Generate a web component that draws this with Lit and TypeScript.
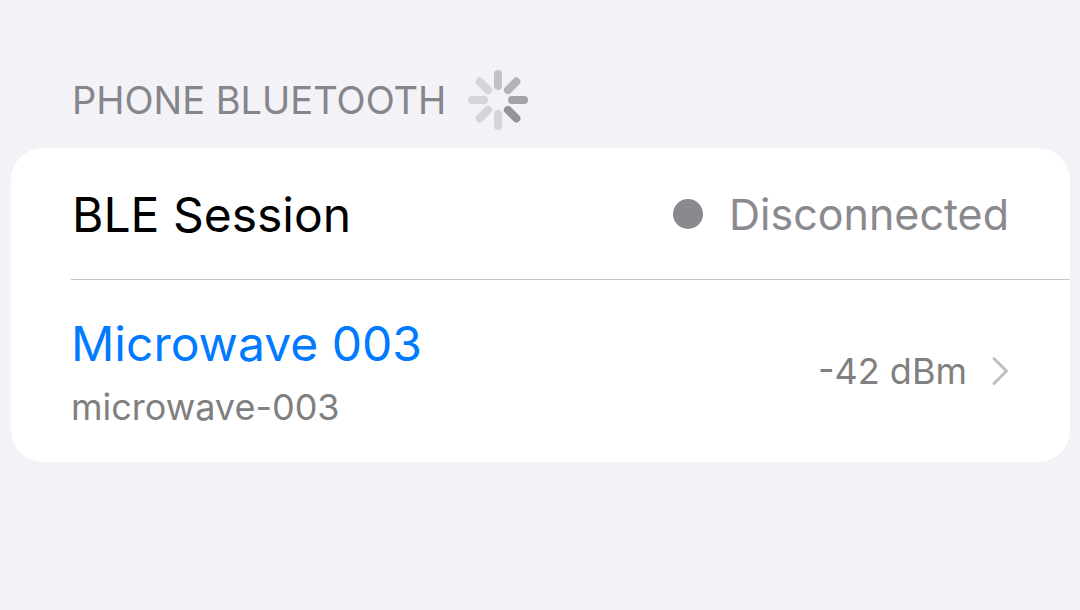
import { LitElement, html, svg, css } from "lit";
import { customElement, property } from "lit/decorators.js";

@customElement("activity-spinner")
class ActivitySpinner extends LitElement {
  static styles = css`
    :host { display: block; width: 60px; height: 60px; }
    svg { display: block; width: 100%; height: 100%; }
  `;
  private spokes = ["#c2c2c6", "#b2b2b7", "#a2a2a7", "#949398", "#d4d4d9", "#d4d4d9", "#d4d4d9", "#d4d4d9"];
  render() {
    return html`<svg viewBox="0 0 60 60" role="img" aria-label="Scanning">
      ${this.spokes.map((c, i) => svg`<line x1="30" y1="4" x2="30" y2="16" stroke=${c} stroke-width="8" stroke-linecap="round" transform="rotate(${i * 45} 30 30)" />`)}
    </svg>`;
  }
}

@customElement("app-root")
class AppRoot extends LitElement {
  @property() status = "Disconnected";
  @property({ attribute: false }) devices = [{ name: "Microwave 003", id: "microwave-003", rssi: -42 }];

  static styles = css`
    :host {
      display: block;
      box-sizing: border-box;
      min-height: 100vh;
      padding: 70px 10px 70px 11px;
      background: #f2f2f7;
      font-family: Inter, sans-serif;
      color: #000;
    }
    header { display: flex; align-items: center; gap: 22px; padding: 0 61px; }
    h2 { margin: 0; font-size: 38px; line-height: 60px; font-weight: 400; color: #86858b; }
    .card { margin-top: 18px; border-radius: 32px; background: #fff; overflow: hidden; }
    .session { display: flex; align-items: center; margin-left: 60px; padding: 37px 61px 34px 1px; border-bottom: 1px solid #c6c6c8; }
    .title { flex: 1; font-size: 48px; line-height: 60px; }
    .status { display: flex; align-items: center; gap: 26px; font-size: 43px; line-height: 58px; padding-bottom: 2px; color: #8a898e; }
    .dot { width: 30px; height: 30px; border-radius: 50%; background: #8a898e; }
    .device { display: flex; align-items: center; width: 100%; box-sizing: border-box; padding: 28px 61px 28px 60px; border: 0; background: none; font: inherit; text-align: left; color: #808080; }
    .names { flex: 1; display: flex; flex-direction: column; }
    .name { font-size: 48px; line-height: 72px; color: #007aff; }
    .id { font-size: 36px; line-height: 54px; }
    .rssi { font-size: 36px; line-height: 54px; }
    .chevron { width: 18px; height: 30px; margin-left: 24px; }
  `;

  render() {
    return html`
      <header><h2>PHONE BLUETOOTH</h2><activity-spinner></activity-spinner></header>
      <section class="card">
        <div class="session">
          <span class="title">BLE Session</span>
          <span class="status"><span class="dot"></span>${this.status}</span>
        </div>
        ${this.devices.map((d) => html`
          <button class="device">
            <span class="names"><span class="name">${d.name}</span><span class="id">${d.id}</span></span>
            <span class="rssi">${d.rssi} dBm</span>
            <svg class="chevron" viewBox="0 0 18 30" fill="none" stroke="#bfbfc1" stroke-width="3" stroke-linecap="round" stroke-linejoin="round"><path d="M3 2.5L15.500 15L3 27.500" /></svg>
          </button>`)}
      </section>`;
  }
}
